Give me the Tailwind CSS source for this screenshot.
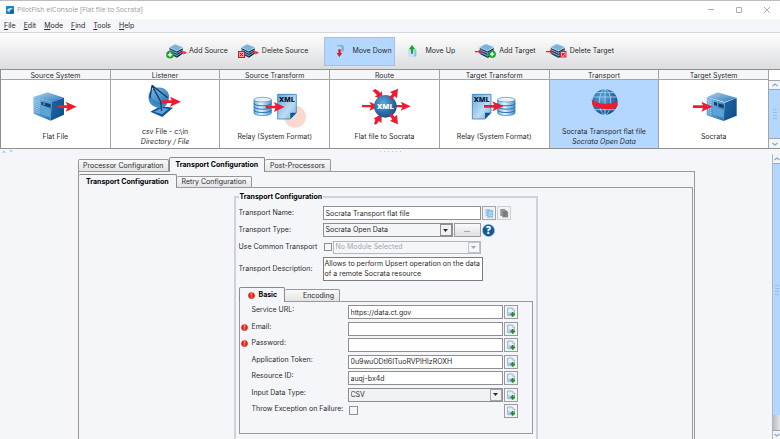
<!DOCTYPE html>
<html lang="en">
<head>
<meta charset="utf-8">
<title>PilotFish eiConsole [Flat file to Socrata]</title>
<script src="https://cdn.jsdelivr.net/npm/@tailwindcss/browser@4"></script>
</head>
<body class="bg-[#f5f6f9]">
<svg class="absolute size-0" aria-hidden="true">
  <defs>
    <linearGradient id="gTop" x1="0" y1="0" x2="1" y2="1"><stop offset="0" stop-color="#a9d3f3"/><stop offset="1" stop-color="#2f78b5"/></linearGradient>
    <linearGradient id="gFront" x1="0" y1="0" x2="1" y2="1"><stop offset="0" stop-color="#7fbce8"/><stop offset="1" stop-color="#2a73b0"/></linearGradient>
    <linearGradient id="gSide" x1="0" y1="0" x2="1" y2="1"><stop offset="0" stop-color="#1f67a6"/><stop offset="1" stop-color="#0d4c86"/></linearGradient>
    <linearGradient id="gDoc" x1="0" y1="0" x2="1" y2="1"><stop offset="0" stop-color="#5fa8dd"/><stop offset=".6" stop-color="#bcdcf4"/><stop offset="1" stop-color="#6fb0e0"/></linearGradient>
    <linearGradient id="gDb" x1="0" y1="0" x2="1" y2="0"><stop offset="0" stop-color="#6fb1df"/><stop offset=".4" stop-color="#eaf5fd"/><stop offset="1" stop-color="#4b93cb"/></linearGradient>
    <radialGradient id="gBall" cx=".4" cy=".35" r=".7"><stop offset="0" stop-color="#5ea5da"/><stop offset="1" stop-color="#0f4f8c"/></radialGradient>
  </defs>
  <symbol id="arrow" viewBox="0 0 58 30" overflow="visible"><path d="M0 11H30L25 0L58 15L25 30L30 19H0Z" fill="#ee1c2e"/></symbol>
  <symbol id="db" viewBox="0 0 54 56" overflow="visible">
    <path d="M1 8V48C1 58 53 58 53 48V8Z" fill="url(#gDb)" stroke="#2272b2" stroke-width="2"/>
    <path d="M1 19C1 29 53 29 53 19M1 29C1 39 53 39 53 29M1 39C1 49 53 49 53 39" fill="none" stroke="#1d6cad" stroke-width="3"/>
    <ellipse cx="27" cy="8" rx="26" ry="7" fill="#e4f2fc" stroke="#3f8bc6" stroke-width="2"/>
  </symbol>
  <symbol id="xmldoc" viewBox="0 0 58 76" overflow="visible">
    <path d="M1 1H57V56L39 75H1Z" fill="url(#gDoc)" stroke="#1a69aa" stroke-width="2"/>
    <path d="M57 56L39 75V56Z" fill="#0f5696"/>
    <text x="5" y="25" font-family="Open Sans, sans-serif" font-weight="800" font-size="21" fill="#0b1c33">XML</text>
  </symbol>
  <symbol id="stack" viewBox="0 0 42 42" overflow="visible">
    <path d="M0 11L24 22V42L2 31Z" fill="#14406b"/><path d="M24 22L42 12V30L24 42Z" fill="#0a2744"/>
    <path d="M0 17L24 28L42 18M0 24L24 35L42 24" fill="none" stroke="#9cc6e6" stroke-width="2.500"/>
    <path d="M0 10L18 0L42 9L24 21Z" fill="#79b3dd" stroke="#b5d6ee" stroke-width="2"/>
  </symbol>
  <symbol id="plus" viewBox="0 0 22 22"><circle cx="11" cy="11" r="10.500" fill="#11a81d"/><path d="M11 5V17M5 11H17" stroke="#fff" stroke-width="4"/></symbol>
  <symbol id="cross" viewBox="0 0 22 22"><rect width="22" height="22" fill="#e3101f"/><rect x="4" y="4" width="14" height="14" fill="#fff"/><path d="M6 6L16 16M16 6L6 16" stroke="#e3101f" stroke-width="4"/></symbol>
  <symbol id="pageadd" viewBox="0 0 30 30">
    <path d="M5 3H19L25 9V26H5Z" fill="#eaf1fb" stroke="#6f8fc4" stroke-width="2"/><path d="M19 3V9H25" fill="#fff" stroke="#6f8fc4" stroke-width="1.500"/>
    <path d="M6 16H20V25H6Z" fill="#b4cdec"/>
    <path d="M20 15V29M13 22H27" stroke="#1f8f2b" stroke-width="5"/>
  </symbol>
  <symbol id="err" viewBox="0 0 22 22"><circle cx="11" cy="11" r="10.500" fill="#e8281f"/><path d="M8 4H14L12.500 12H9.500Z" fill="#ff9a8e"/><rect x="9" y="14" width="4" height="4" fill="#ff9a8e"/></symbol>
  <symbol id="down" viewBox="0 0 10 6"><path d="M0 0H10L5 6Z" fill="currentColor"/></symbol>
  <symbol id="chev" viewBox="0 0 12 8"><path d="M1 2L6 6L11 2" fill="none" stroke="currentColor" stroke-width="2.500"/></symbol>
</svg>

<div class="flex h-screen flex-col overflow-hidden border-t border-[#bdbdbd] font-['Inter','Liberation_Sans',sans-serif] text-[7px] leading-[10px] text-[#2b2b2b]">

  <header class="flex h-[18px] shrink-0 items-center bg-white pl-[6px] pr-[10px]">
    <svg class="size-[8px]" viewBox="0 0 24 24"><rect width="24" height="24" rx="2" fill="#1c84c6"/><path d="M3 13C7 5 16 4 21 9C15 8 12 11 10 18C8 18 5 16 3 13Z" fill="#bfe3f8"/><path d="M12 18C15 13 18 12 22 12V22H12Z" fill="#0d5c98"/></svg>
    <h1 class="ml-[3px] whitespace-nowrap font-['Open_Sans',sans-serif] text-[7px] text-[#9a9a9a]">PilotFish eiConsole [Flat file to Socrata]</h1>
    <div class="ml-auto flex items-center gap-[22px] text-[#b0b0b0]">
      <button aria-label="Minimize"><svg class="size-[6px]" viewBox="0 0 6 6"><path d="M0 2.500H6" stroke="currentColor"/></svg></button>
      <button aria-label="Maximize"><svg class="size-[6px]" viewBox="0 0 6 6"><path d="M.5 .5H5.500V5.500H.5Z" fill="none" stroke="currentColor"/></svg></button>
      <button aria-label="Close"><svg class="size-[6px]" viewBox="0 0 6 6"><path d="M0 0L6 6M6 0L0 6" stroke="currentColor"/></svg></button>
    </div>
  </header>

  <nav class="flex h-[14px] shrink-0 items-center gap-[8px] border-b border-[#d5d7dc] px-[4px] pt-[1px]">
    <button><u>F</u>ile</button><button><u>E</u>dit</button><button><u>M</u>ode</button><button><u>F</u>ind</button><button><u>T</u>ools</button><button><u>H</u>elp</button>
  </nav>

  <div class="flex h-[37px] shrink-0 items-center justify-center border-b border-[#8f8f8f] bg-linear-to-b from-white to-[#dcdddf]">
    <button class="flex items-center gap-[2px]"><svg class="h-[15px] w-[21px]" viewBox="0 0 63 45"><use href="#stack" x="10" y="0" width="40" height="42"/><use href="#arrow" x="42" y="18" width="21" height="16"/><use href="#plus" x="0" y="20" width="24" height="24"/></svg>Add Source</button>
    <button class="ml-[10px] flex items-center gap-[3px]"><svg class="h-[15px] w-[21px]" viewBox="0 0 63 45"><use href="#stack" x="10" y="0" width="40" height="42"/><use href="#arrow" x="42" y="18" width="21" height="16"/><use href="#cross" x="0" y="21" width="21" height="21"/></svg>Delete Source</button>
    <button class="ml-[16px] flex h-[29px] w-[71px] items-center gap-[7px] border border-[#9cc3ee] bg-[#b3d7ff] pl-[9px]"><svg class="h-[14px] w-[11px]" viewBox="0 0 33 42"><path d="M3 5L22 2L30 6V20L22 24L3 20Z" fill="#7fb2dc"/><path d="M3 5L22 8V24L3 20Z" fill="#b6d8f0"/><path d="M13 16H20V27H25L16 39L8 27H13Z" fill="#e81626"/></svg>Move Down</button>
    <button class="ml-[12px] flex items-center gap-[8px]"><svg class="h-[14px] w-[10px]" viewBox="0 0 30 42"><path d="M3 20L8 16H28V36L22 39H3Z" fill="#8ebfe4"/><path d="M3 20H22V39H3Z" fill="#c9e2f4"/><path d="M12 29H18V15H24L15 3L6 15H12Z" fill="#18a428"/></svg>Move Up</button>
    <button class="ml-[20px] flex items-center gap-[3px]"><svg class="h-[15px] w-[21px]" viewBox="0 0 63 45"><use href="#stack" x="14" y="0" width="42" height="42"/><use href="#arrow" x="0" y="15" width="24" height="16"/><use href="#plus" x="40" y="19" width="23" height="23"/></svg>Add Target</button>
    <button class="ml-[10px] flex items-center gap-[3px]"><svg class="h-[15px] w-[21px]" viewBox="0 0 63 45"><use href="#stack" x="14" y="0" width="42" height="42"/><use href="#arrow" x="0" y="15" width="24" height="16"/><use href="#cross" x="41" y="20" width="21" height="21"/></svg>Delete Target</button>
  </div>

  <section class="flex h-[79px] shrink-0 border-b border-l border-[#8f8f8f] bg-white">
    <div class="grid flex-1 grid-cols-7 grid-rows-[10px_1fr] text-center [&>*]:border-r [&>*]:border-[#a5a5a5] [&>h2]:border-b [&>h2]:bg-[#f5f6f9] [&>h2]:leading-[11px] [&>button]:flex [&>button]:flex-col [&>button]:items-center [&>button]:justify-center [&_svg]:mb-[6px] [&_svg]:h-[40px] [&_svg]:w-[50px] [&_svg]:overflow-visible">
      <h2>Source System</h2><h2>Listener</h2><h2>Source Transform</h2><h2>Route</h2><h2>Target Transform</h2><h2>Transport</h2><h2>Target System</h2>

      <button><svg viewBox="90 57 150 120">
        <path d="M100 90L143 76L192 92L155 105Z" fill="url(#gTop)"/><path d="M100 90L155 105L152 161L101 140Z" fill="url(#gFront)"/><path d="M155 105L192 92V143L152 161Z" fill="url(#gSide)"/>
        <path d="M105 97V138M111 99V141M117 101V143" stroke="#d5eafa" stroke-width="2.500" stroke-dasharray="3 3"/><path d="M124 104L152 112V122L124 113Z" fill="#10406e"/><path d="M121 116L152 126V152L121 141Z" fill="#5ba3d9"/><path d="M132 107V114" stroke="#9bcbef" stroke-width="3"/>
        <use href="#arrow" x="172" y="104" width="58" height="30"/></svg>Flat File</button>

      <button><svg viewBox="420 42 150 120">
        <path d="M451 134L483 117L519 122L487 150Z" fill="#135494"/><path d="M462 134L485 122L505 126L486 142Z" fill="#5ba2d8"/>
        <path d="M447 82C442 98 450 118 472 122C492 124 506 112 504 98Z" fill="#3e8ac6"/>
        <path d="M447 82C455 62 480 58 495 68C508 78 508 92 502 106C480 118 455 104 447 82Z" fill="url(#gFront)" stroke="#1d67a8" stroke-width="2"/>
        <path d="M456 55L450 93M456 55L503 92M456 55L482 104M482 104L485 132" fill="none" stroke="#123f6e" stroke-width="4"/>
        <use href="#arrow" x="485" y="89" width="58" height="30"/></svg><span>csv File - c:\in</span><i>Directory / File</i></button>

      <button><svg viewBox="178 57 150 120">
        <circle cx="313" cy="149" r="33" fill="#fbd9d0"/>
        <use href="#db" x="189" y="90" width="54" height="56"/><use href="#xmldoc" x="260" y="81" width="58" height="76"/>
        <use href="#arrow" x="225" y="105" width="57" height="30"/></svg>Relay (System Format)</button>

      <button><svg viewBox="508 57 150 120">
        <use href="#arrow" x="517" y="103" width="52" height="29"/><use href="#arrow" x="611" y="103" width="52" height="29"/>
        <path d="M557 66L565 71L573 78L577 71L578 99L555 88L562 85L553 75L548 71Z" fill="#ee1c2e"/>
        <path d="M553 170L557 159L553 154L577 140L575 169L568 162L559 173Z" fill="#ee1c2e"/>
        <circle cx="587" cy="118" r="34" fill="url(#gBall)"/>
        <path d="M625 65L622 94L615 87L605 99L598 92L608 80L601 75Z" fill="#ee1c2e"/>
        <path d="M625 172L601 162L608 157L598 145L605 138L615 150L622 143Z" fill="#ee1c2e"/>
        <text x="587" y="126" text-anchor="middle" font-family="Open Sans, sans-serif" font-weight="800" font-size="22" fill="#fff">XML</text></svg>Flat file to Socrata</button>

      <button><svg viewBox="267 57 150 120">
        <use href="#xmldoc" x="276" y="81" width="58" height="76"/><use href="#db" x="352" y="90" width="54" height="56"/>
        <use href="#arrow" x="312" y="103" width="58" height="30"/></svg>Relay (System Format)</button>

      <button class="bg-[#b3d7ff]"><svg viewBox="-5 42 150 120">
        <circle cx="73" cy="105" r="38" fill="url(#gBall)"/>
        <g fill="none" stroke="#a8d2f2" stroke-width="2.500"><ellipse cx="73" cy="105" rx="17" ry="38"/><path d="M73 67V143M38 90H108M46 77H100M42 128H104"/></g>
        <path d="M33 96C45 112 85 114 104 105L107 98L111 115L104 124C85 130 45 126 35 112Z" fill="#ee1c2e"/></svg><span>Socrata Transport flat file</span><i>Socrata Open Data</i></button>

      <button><svg viewBox="324 57 150 120">
        <path d="M377 91L410 76L467 93L431 105Z" fill="url(#gTop)"/><path d="M377 91L431 107L428 162L377 145Z" fill="url(#gFront)"/><path d="M431 107L467 93V146L428 162Z" fill="url(#gSide)"/>
        <path d="M383 97V143M389 99V145" stroke="#d5eafa" stroke-width="2.500" stroke-dasharray="3 3"/><path d="M399 104L408 107V117L399 114ZM412 109L428 113V124L412 119Z" fill="#10406e"/><path d="M396 120L428 129V152L396 143Z" fill="#5ba3d9"/>
        <use href="#arrow" x="336" y="104" width="58" height="30"/></svg>Socrata</button>
    </div>
    <div class="mt-[10px] flex w-[11px] flex-col border-t border-[#a5a5a5] bg-[#b3d7ff] text-[#7fa9dc]">
      <button aria-label="Scroll up" class="flex h-[9px] items-center justify-center border-b border-[#a5a5a5] bg-[#f3f4f6]"><svg class="h-[4px] w-[6px] rotate-180"><use href="#chev"/></svg></button>
      <div class="flex flex-1 flex-col items-center justify-center gap-[2px]"><i class="h-px w-[4px] bg-[#97bfec]"></i><i class="h-px w-[4px] bg-[#97bfec]"></i><i class="h-px w-[4px] bg-[#97bfec]"></i><i class="h-px w-[4px] bg-[#97bfec]"></i></div>
      <button aria-label="Scroll down" class="flex h-[10px] items-center justify-center border-t border-[#a5a5a5] bg-[#f3f4f6]"><svg class="h-[4px] w-[6px]"><use href="#chev"/></svg></button>
    </div>
  </section>

  <div class="relative flex h-[5px] shrink-0 items-center justify-center gap-[3px] text-[#a9cdf5]">
    <span class="absolute left-[2px] top-[1px] flex gap-[3px]"><svg class="h-[3px] w-[4px] rotate-180"><use href="#down"/></svg><svg class="h-[3px] w-[4px]"><use href="#down"/></svg></span>
    <i class="size-px bg-[#a9cdf5]"></i><i class="size-px bg-[#a9cdf5]"></i><i class="size-px bg-[#a9cdf5]"></i><i class="size-px bg-[#a9cdf5]"></i><i class="size-px bg-[#a9cdf5]"></i><i class="size-px bg-[#a9cdf5]"></i>
  </div>

  <main class="flex min-h-0 flex-1">
    <div class="flex min-w-0 flex-1 flex-col pl-[78px] pr-[77px] pt-[3px]">
      <div role="tablist" class="flex items-end">
        <button role="tab" class="h-[12px] rounded-t-[2px] border border-b-0 border-[#989898] bg-linear-to-b from-[#fafafa] to-[#e3e4e6] px-[4px]">Processor Configuration</button>
        <button role="tab" aria-selected="true" class="relative -mb-px h-[15px] rounded-t-[2px] border border-b-0 border-[#8b8b8b] bg-[#f5f6f9] px-[6px] font-bold text-black">Transport Configuration</button>
        <button role="tab" class="h-[12px] rounded-t-[2px] border border-b-0 border-l-0 border-[#989898] bg-linear-to-b from-[#fafafa] to-[#e3e4e6] px-[5px]">Post-Processors</button>
      </div>
      <div class="flex min-h-0 flex-1 flex-col border border-b-0 border-[#9a9a9a] pr-[1px] pt-[2px]">
        <div role="tablist" class="flex items-end">
          <button role="tab" aria-selected="true" class="relative -mb-px h-[14px] rounded-t-[2px] border border-b-0 border-l-0 border-[#8b8b8b] bg-[#f5f6f9] px-[7px] font-bold text-black">Transport Configuration</button>
          <button role="tab" class="h-[11px] rounded-t-[2px] border border-b-0 border-l-0 border-[#989898] bg-linear-to-b from-[#fafafa] to-[#e3e4e6] px-[5px]">Retry Configuration</button>
        </div>
        <div class="min-h-0 flex-1 border-r border-t border-[#9a9a9a] pt-[4px]">
          <fieldset class="mx-auto h-[260px] w-[304px] border-2 border-[#d0d2d9] px-[3px]">
            <legend class="px-[1px] font-bold text-black">Transport Configuration</legend>
            <div class="grid grid-cols-[84px_1fr] items-center gap-y-[3px] pt-[4px]">
              <label for="name">Transport Name:</label>
              <div class="flex h-[14px] items-center gap-[1px]">
                <input id="name" value="Socrata Transport flat file" class="h-[14px] w-[158px] border border-[#8f8f8f] bg-white px-[2px]">
                <button aria-label="Copy" class="flex h-[14px] w-[14px] items-center justify-center border border-[#a5a5a5] bg-[#eef0f3]"><svg class="size-[10px]" viewBox="0 0 30 30"><path d="M4 3H18V25H4Z" fill="#a9d0f0"/><path d="M11 7H26V28H11Z" fill="#8cc0ea" stroke="#5c9dd4"/><path d="M14 13H23M14 18H23M14 23H23" stroke="#d8ecfb" stroke-width="2"/></svg></button>
                <button aria-label="Paste" class="flex h-[14px] w-[14px] items-center justify-center border border-[#cfd0d4] bg-[#f1f2f4]"><svg class="size-[10px]" viewBox="0 0 30 30"><path d="M4 3H18V24H4Z" fill="#8f8f8f"/><path d="M10 7H22L27 12V28H10Z" fill="#7c7c7c" stroke="#b5b5b5" stroke-width="1.500"/></svg></button>
              </div>
              <label for="type">Transport Type:</label>
              <div class="flex h-[14px] items-center gap-[1px]">
                <div class="relative w-[130px]">
                  <select id="type" class="block h-[14px] w-full appearance-none border border-[#8f8f8f] bg-[#f4f5f7] px-[2px]"><option>Socrata Open Data</option></select>
                  <span class="pointer-events-none absolute right-[1px] top-[1px] flex h-[12px] w-[12px] items-center justify-center border border-[#8f8f8f] bg-[#f1f1f1]"><svg class="h-[3px] w-[5px]"><use href="#down"/></svg></span>
                </div>
                <button class="h-[14px] w-[27px] border border-[#9b9b9b] bg-linear-to-b from-[#fafafa] to-[#dedfe1]">...</button>
                <button aria-label="Help"><svg class="size-[13px]" viewBox="0 0 39 39"><circle cx="19.500" cy="19.500" r="18.500" fill="#145c97" stroke="#a9c8e0" stroke-width="2"/><text x="19.500" y="30" text-anchor="middle" font-family="Open Sans, sans-serif" font-size="29" font-weight="800" fill="#fff">?</text></svg></button>
              </div>
              <label for="common" class="whitespace-nowrap">Use Common Transport</label>
              <div class="flex h-[14px] items-center gap-[1px]">
                <input id="common" type="checkbox" class="ml-[1px] size-[8px] appearance-none border border-[#8f8f8f] bg-[#f5f6f9]">
                <div class="relative w-[148px]">
                  <select aria-label="Common transport module" disabled class="block h-[13px] w-full appearance-none border border-[#b5b7bd] bg-[#f5f6f9] px-[2px] text-[#a6a8ae]"><option>No Module Selected</option></select>
                  <span class="pointer-events-none absolute right-[1px] top-[1px] flex h-[11px] w-[12px] items-center justify-center border border-[#c3c5ca] text-[#a6a8ae]"><svg class="h-[3px] w-[5px]"><use href="#down"/></svg></span>
                </div>
              </div>
              <label for="desc">Transport Description:</label>
              <textarea id="desc" class="block h-[24px] w-[160px] resize-none overflow-hidden whitespace-pre border border-[#7d7d7d] bg-white px-[1px] py-[1px]">Allows to perform Upsert operation on the data
of a remote Socrata resource</textarea>
            </div>

            <div role="tablist" class="mt-[6px] flex items-end">
              <button role="tab" aria-selected="true" class="relative -mb-px flex h-[15px] w-[46px] items-center gap-[4px] rounded-t-[2px] border border-b-0 border-[#8b8b8b] bg-[#f5f6f9] pl-[8px] font-bold text-black"><svg class="size-[7px]"><use href="#err"/></svg>Basic</button>
              <button role="tab" class="h-[12px] w-[55px] rounded-t-[2px] border border-b-0 border-l-0 border-[#989898] bg-linear-to-b from-[#fafafa] to-[#e3e4e6] pl-[14px]">Encoding</button>
            </div>
            <div class="h-[133px] border border-[#9a9a9a] pt-[3px]">
              <div class="grid h-[116px] grid-cols-[11px_95px_155px_14px] grid-rows-7 gap-x-[1px] [&>button]:flex [&>button]:size-[14px] [&>button]:items-center [&>button]:justify-center [&>button]:border [&>button]:border-[#9b9b9b] [&>button]:bg-[#f3f4f6] [&>input[type=text]]:h-[14px] [&>input[type=text]]:border [&>input[type=text]]:border-[#8f8f8f] [&>input[type=text]]:bg-white [&>input[type=text]]:px-[2px] [&>button>svg]:size-[10px] [&>span>svg]:ml-[1px] [&>span>svg]:mt-[2px] [&>span>svg]:size-[7px]">
                <span></span><label for="url">Service URL:</label><input id="url" type="text" value="https://data.ct.gov"><button aria-label="Insert expression"><svg><use href="#pageadd"/></svg></button>
                <span><svg><use href="#err"/></svg></span><label for="email">Email:</label><input id="email" type="text"><button aria-label="Insert expression"><svg><use href="#pageadd"/></svg></button>
                <span><svg><use href="#err"/></svg></span><label for="pw">Password:</label><input id="pw" type="text"><button aria-label="Insert expression"><svg><use href="#pageadd"/></svg></button>
                <span></span><label for="token">Application Token:</label><input id="token" type="text" value="0u9wuODtI6ITuoRVPlHIzROXH"><button aria-label="Insert expression"><svg><use href="#pageadd"/></svg></button>
                <span></span><label for="res">Resource ID:</label><input id="res" type="text" value="auqj-bx4d"><button aria-label="Insert expression"><svg><use href="#pageadd"/></svg></button>
                <span></span><label for="dtype">Input Data Type:</label>
                <div class="relative h-[14px]">
                  <select id="dtype" class="block h-[14px] w-full appearance-none border border-[#8f8f8f] bg-[#f1f2f4] px-[2px]"><option>CSV</option></select>
                  <span class="pointer-events-none absolute right-[1px] top-[1px] flex h-[12px] w-[12px] items-center justify-center border border-[#a5a5a5] bg-[#f1f1f1]"><svg class="h-[3px] w-[5px]"><use href="#down"/></svg></span>
                </div><button aria-label="Insert expression"><svg><use href="#pageadd"/></svg></button>
                <span></span><label for="throw" class="whitespace-nowrap">Throw Exception on Failure:</label><input id="throw" type="checkbox" class="ml-[1px] mt-[2px] size-[9px] appearance-none border border-[#8f8f8f] bg-[#f5f6f9]"><button aria-label="Insert expression"><svg><use href="#pageadd"/></svg></button>
              </div>
            </div>
          </fieldset>
        </div>
      </div>
    </div>
    <div class="flex w-[8px] flex-col border-l border-[#b5b5b5] bg-[#b3d7ff] text-[#7fa9dc]">
      <button aria-label="Scroll up" class="flex h-[10px] items-center justify-center border-b border-[#a5a5a5] bg-[#f3f4f6]"><svg class="h-[4px] w-[6px] rotate-180"><use href="#chev"/></svg></button>
      <div class="flex flex-1 flex-col items-center justify-center gap-[2px]"><i class="h-px w-[4px] bg-[#97bfec]"></i><i class="h-px w-[4px] bg-[#97bfec]"></i><i class="h-px w-[4px] bg-[#97bfec]"></i><i class="h-px w-[4px] bg-[#97bfec]"></i></div>
      <div class="h-[15px] bg-linear-to-r from-[#b9bac4] to-[#e6e7ec]"></div>
      <button aria-label="Scroll down" class="flex h-[9px] items-center justify-center border-t border-[#a5a5a5] bg-[#f3f4f6]"><svg class="h-[4px] w-[6px]"><use href="#chev"/></svg></button>
    </div>
  </main>
</div>
</body>
</html>
